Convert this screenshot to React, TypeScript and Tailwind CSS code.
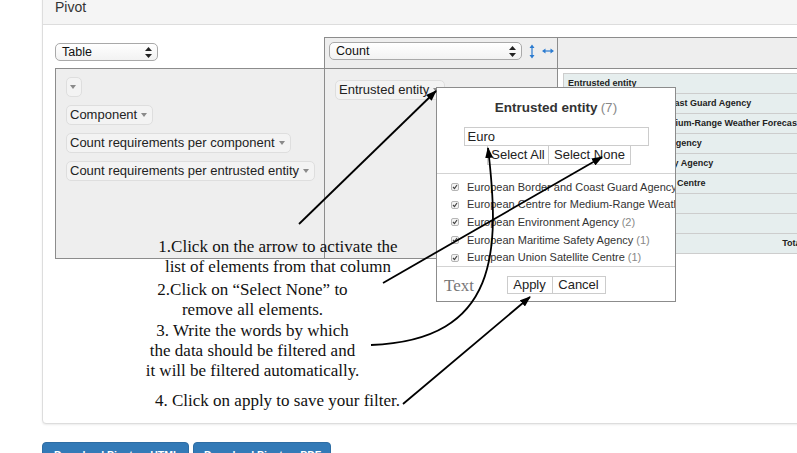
import React from 'react';

const entities = [
  { name: 'European Border and Coast Guard Agency', count: 1 },
  { name: 'European Centre for Medium-Range Weather Forecasts', count: 1 },
  { name: 'European Environment Agency', count: 2 },
  { name: 'European Maritime Safety Agency', count: 1 },
  { name: 'European Union Satellite Centre', count: 1 },
];

const Caret = ({ className = '' }: { className?: string }) => (
  <span
    className={`inline-block w-0 h-0 border-l-[3px] border-r-[3px] border-t-[4px] border-l-transparent border-r-transparent border-t-[#8a8a8a] ${className}`}
  />
);

const Attr = ({ label }: { label?: string }) => (
  <span className="inline-flex items-center h-[20px] pl-[3px] pr-[5px] border border-[#dedede] bg-[#f3f3f3] rounded-[5px] text-[13px] text-[#222] whitespace-nowrap">
    {label}
    <Caret className={label ? 'ml-[4px]' : ''} />
  </span>
);

const UpDown = () => (
  <svg width="7" height="11" viewBox="0 0 7 11">
    <path d="M3.5 0 L7 4 H0 Z M0 7 H7 L3.5 11 Z" fill="#222" />
  </svg>
);

const MacSelect = ({ label, className = '' }: { label: string; className?: string }) => (
  <div
    className={`flex items-center justify-between h-[18px] pl-[6px] pr-[5px] border border-[#a9a9a9] rounded-[5px] bg-gradient-to-b from-white to-[#f2f2f2] text-[12.5px] text-[#111] ${className}`}
  >
    <span>{label}</span>
    <UpDown />
  </div>
);

const Check = () => (
  <span className="inline-flex items-center justify-center w-[8px] h-[8px] border border-[#b5b5b5] rounded-[2px] bg-[#f4f4f4]">
    <svg width="6" height="6" viewBox="0 0 6 6">
      <path d="M1 3 L2.5 4.6 L5 1" stroke="#444" strokeWidth="1.2" fill="none" />
    </svg>
  </span>
);

const tableRows = [
  'Entrusted entity',
  ...entities.map((e) => e.name),
  '',
  '',
];

export default function App() {
  return (
    <div className="relative w-[797px] h-[453px] overflow-hidden bg-white font-['Liberation_Sans',Arial,sans-serif] text-[#333]">
      {/* panel */}
      <div className="-mt-[13px] ml-[42px] w-[790px] border border-[#ddd] rounded-[4px] bg-white shadow-[0_1px_2px_rgba(0,0,0,0.08)]">
        <div className="h-[37px] pt-[9px] px-[12px] leading-[20px] text-[14px] bg-[#f5f5f5] border-b border-[#ddd]">
          Pivot
        </div>
        <div className="h-[398px] pt-[12px] pl-[12px]">
          <div className="grid grid-cols-[269px_234px_1fr] grid-rows-[31px_191px]">
            <div className="pt-[6px]">
              <MacSelect label="Table" className="w-[103px]" />
            </div>
            <div className="flex items-start gap-[7px] pt-[4px] pl-[4px] bg-[#eee] border-t border-l border-r border-[#8c8c8c]">
              <MacSelect label="Count" className="w-[193px]" />
              <div className="flex items-center gap-[7px] h-[18px]">
                <svg width="6" height="15" viewBox="0 0 6 15">
                  <path d="M3 2 V13" stroke="#2b7bd0" strokeWidth="1.2" />
                  <path d="M0.5 4 L3 0.5 L5.5 4 Z M0.5 11 L3 14.5 L5.5 11 Z" fill="#2b7bd0" />
                </svg>
                <svg width="12" height="6" viewBox="0 0 12 6">
                  <path d="M2 3 H10" stroke="#2b7bd0" strokeWidth="1.2" />
                  <path d="M3.5 0.5 L0 3 L3.5 5.5 Z M8.5 0.5 L12 3 L8.5 5.5 Z" fill="#2b7bd0" />
                </svg>
              </div>
            </div>
            <div className="bg-[#eee] border-t border-[#8c8c8c]" />
            <div className="flex flex-col items-start gap-[8px] pt-[8px] pl-[10px] bg-[#eee] border border-r-0 border-[#8c8c8c]">
              <Attr />
              <Attr label="Component" />
              <Attr label="Count requirements per component" />
              <Attr label="Count requirements per entrusted entity" />
            </div>
            <div className="pt-[8px] pl-[10px] bg-[#eee] border border-[#8c8c8c]">
              <Attr label="Entrusted entity" />
            </div>
            <div className="pt-[4px] pl-[5px] border-t border-[#8c8c8c] overflow-hidden">
              <div className="w-[250px] border-l border-t border-[#cdcdcd] text-[9px] font-bold text-[#222]">
                {tableRows.map((r, i) => (
                  <div
                    key={i}
                    className="flex items-center h-[20px] px-[4px] bg-[#e6eeee] border-r border-b border-[#cdcdcd] whitespace-nowrap"
                  >
                    {r}
                  </div>
                ))}
                <div className="flex items-center justify-end h-[20px] px-[4px] bg-[#e6eeee] border-r border-b border-[#cdcdcd]">
                  Totals
                </div>
              </div>
            </div>
          </div>
        </div>
      </div>

      {/* buttons under panel */}
      <div className="flex items-start gap-[4px] ml-[42px] mt-[18px]">
        <div className="w-[147px] h-[34px] pt-[6px] pl-[11px] text-[10.5px] font-bold leading-[12px] text-white bg-[#337ab7] border border-[#2e6da4] rounded-[4px] whitespace-nowrap">
          Download Pivot as HTML
        </div>
        <div className="w-[138px] h-[34px] pt-[6px] pl-[10px] text-[10.5px] font-bold leading-[12px] text-white bg-[#337ab7] border border-[#2e6da4] rounded-[4px] whitespace-nowrap">
          Download Pivot as PDF
        </div>
      </div>

      {/* filter popup */}
      <div className="absolute left-[436px] top-[87px] w-[240px] border border-[#8c8c8c] bg-white text-center overflow-hidden z-10">
        <div className="pt-[9px] h-[29px] leading-[20px]">
          <span className="text-[13.5px] font-bold text-[#333]">Entrusted entity</span>
          <span className="ml-[3px] text-[13.5px] text-[#888]">(7)</span>
        </div>
        <div className="mt-[10px] mx-auto w-[185px] h-[19px] border border-[#ccc] text-left pl-[3px] text-[13px] leading-[17px] text-[#222]">
          Euro
        </div>
        <div className="flex justify-center pl-[6px]">
          <span className="w-[62px] h-[19px] border border-t-0 border-[#ccc] text-[13px] leading-[18px] text-[#222]">
            Select All
          </span>
          <span className="w-[82px] h-[19px] border border-t-0 border-l-0 border-[#ccc] text-[13px] leading-[18px] text-[#222]">
            Select None
          </span>
        </div>
        <div className="mt-[8px] pt-[4px] border-t border-b border-[#d3d3d3]">
          {entities.map((e) => (
            <div key={e.name} className="flex items-center gap-[8px] h-[17.7px] pl-[14px] whitespace-nowrap text-[11px] text-[#333]">
              <Check />
              <span>
                {e.name}
                <span className="ml-[3px] text-[#888]">({e.count})</span>
              </span>
            </div>
          ))}
        </div>
        <div className="relative flex justify-center h-[34px] pt-[9px]">
          <span className="absolute left-[7px] top-[6px] font-['Liberation_Serif','Times_New_Roman',serif] text-[17px] text-[#777]">
            Text
          </span>
          <span className="w-[46px] h-[18px] border border-[#ccc] text-[13px] leading-[16px] text-[#222]">Apply</span>
          <span className="w-[53px] h-[18px] border border-l-0 border-[#ccc] text-[13px] leading-[16px] text-[#222]">
            Cancel
          </span>
        </div>
      </div>

      {/* annotations */}
      <div className="absolute left-[128px] top-[237px] w-[300px] text-center font-['Liberation_Serif','Times_New_Roman',serif] text-[17px] leading-[20px] text-[#111] z-20">
        <p>1.Click on the arrow to activate the</p>
        <p>list of elements from that column</p>
      </div>
      <div className="absolute left-[122px] top-[280px] w-[261px] text-center font-['Liberation_Serif','Times_New_Roman',serif] text-[17px] leading-[20.25px] text-[#111] z-20">
        <p>2.Click on “Select None” to</p>
        <p>remove all elements.</p>
        <p>3. Write the words by which</p>
        <p>the data should be filtered and</p>
        <p>it will be filtered automatically.</p>
      </div>
      <div className="absolute left-[155px] top-[391px] font-['Liberation_Serif','Times_New_Roman',serif] text-[17px] leading-[20px] text-[#111] whitespace-nowrap z-20">
        4. Click on apply to save your filter.
      </div>

      <svg className="absolute left-0 top-0 pointer-events-none z-30" width="797" height="453">
        <defs>
          <marker id="ah" markerWidth="11" markerHeight="8" refX="10" refY="4" orient="auto" markerUnits="userSpaceOnUse">
            <path d="M0,0 L11,4 L0,8 Z" fill="#000" />
          </marker>
        </defs>
        <line x1="299" y1="224" x2="436" y2="91" stroke="#000" strokeWidth="1.8" markerEnd="url(#ah)" />
        <line x1="383" y1="283" x2="602" y2="157" stroke="#000" strokeWidth="1.8" markerEnd="url(#ah)" />
        <path d="M371 345 C 500 340, 500 250, 488 148" stroke="#000" strokeWidth="1.8" fill="none" markerEnd="url(#ah)" />
        <line x1="403" y1="404" x2="530" y2="297" stroke="#000" strokeWidth="1.8" markerEnd="url(#ah)" />
      </svg>
    </div>
  );
}
